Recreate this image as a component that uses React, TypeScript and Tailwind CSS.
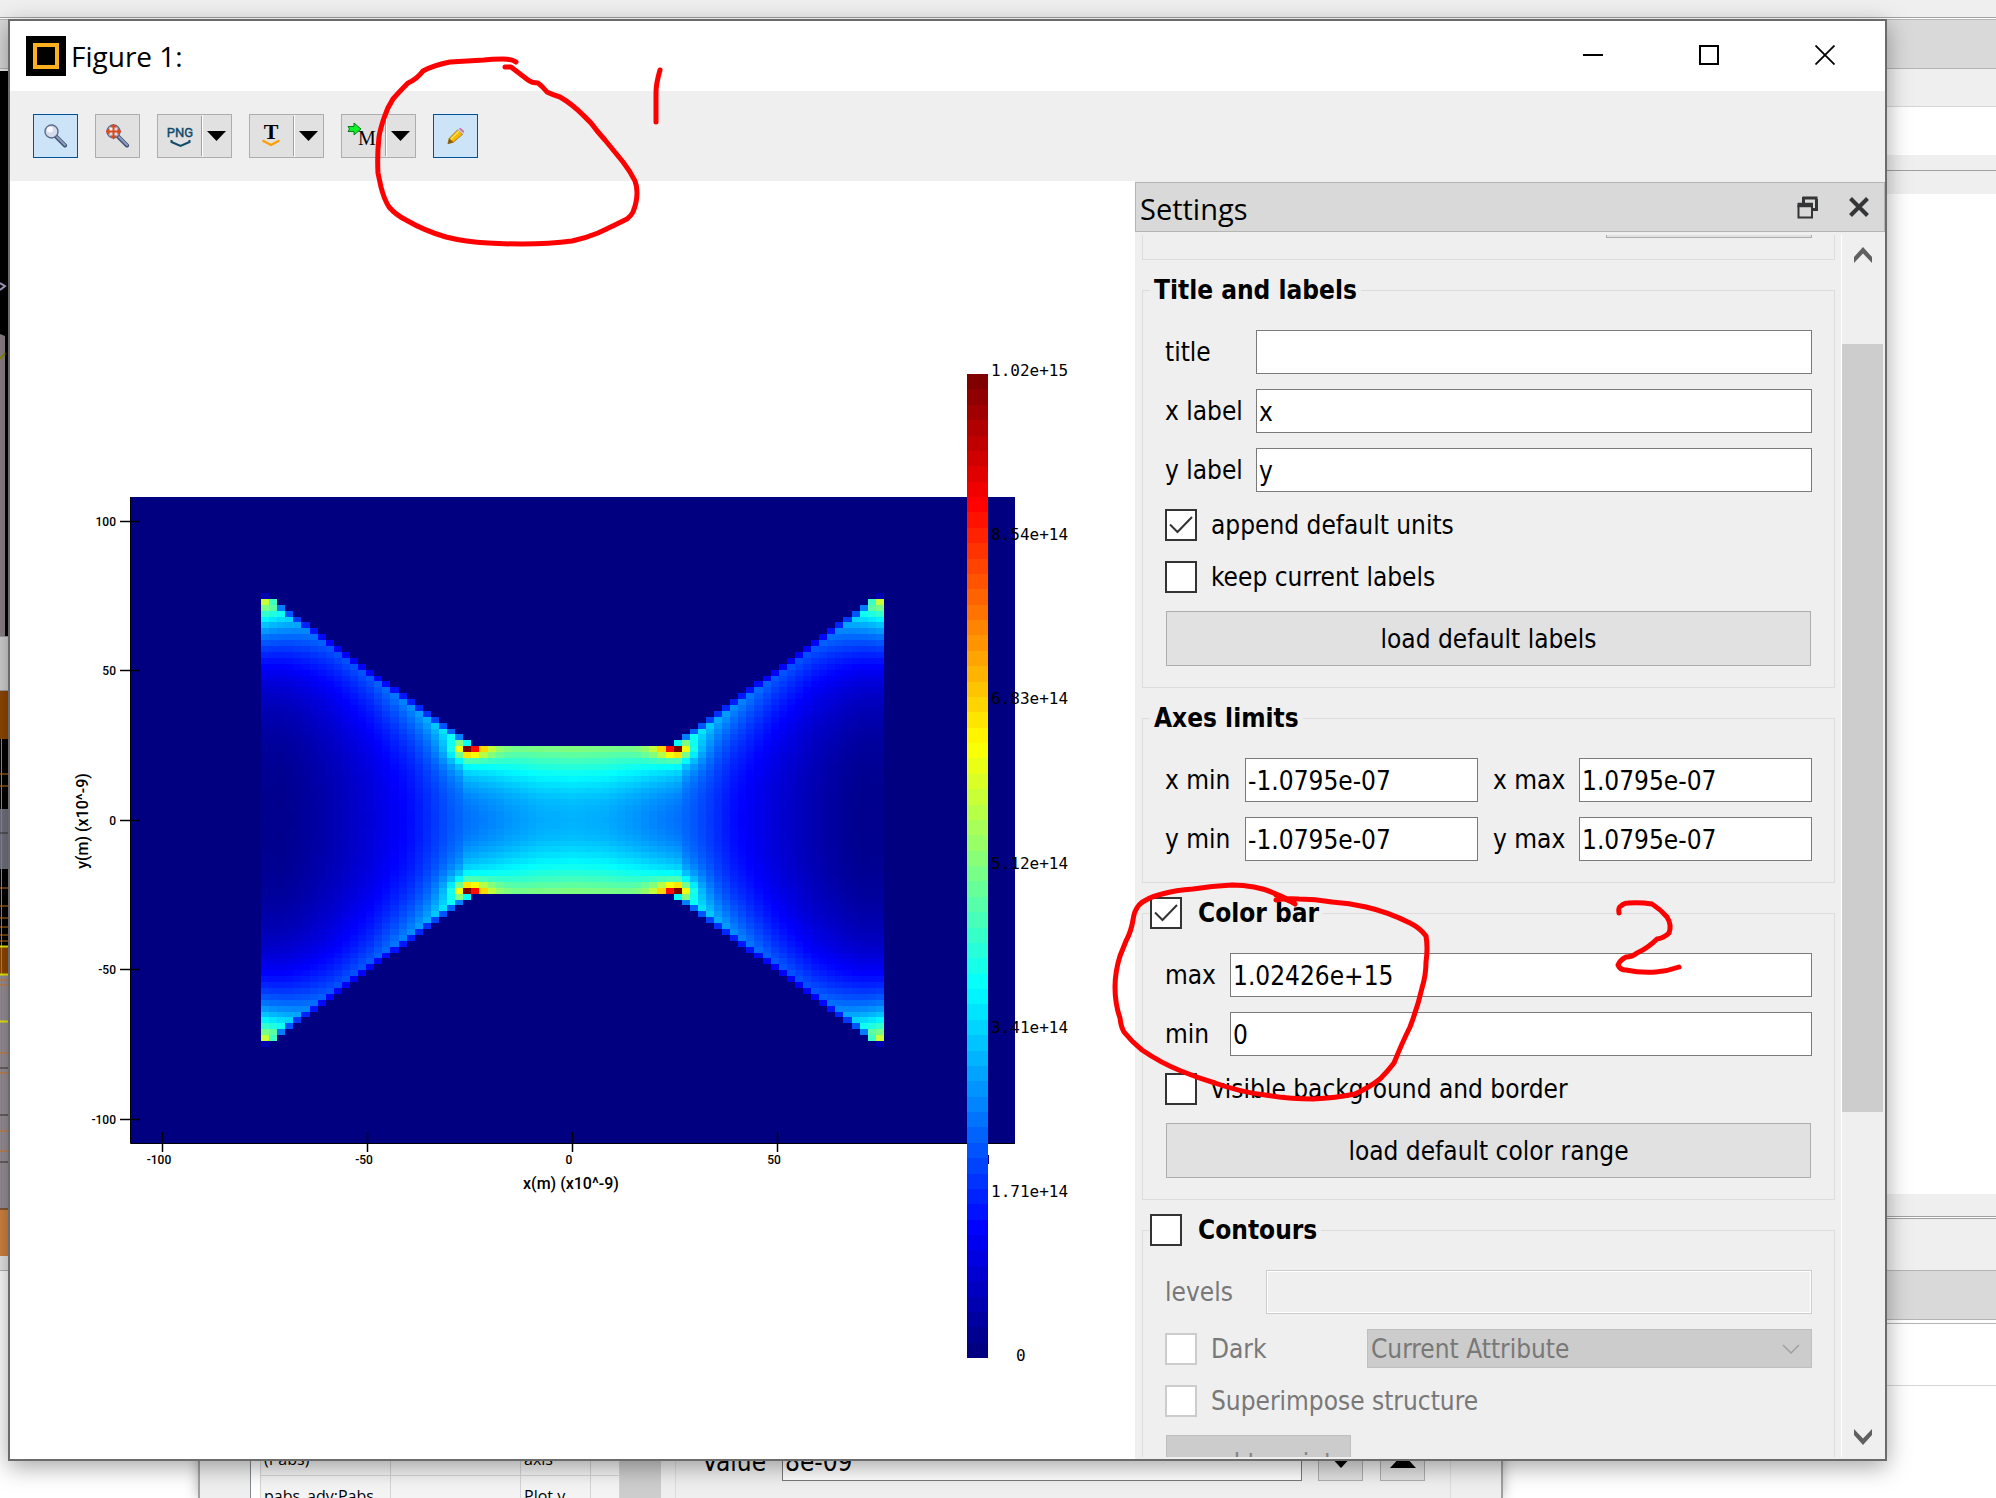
import { useId } from "react";
import type { ReactNode } from "react";

type RGB = [number, number, number];

const CELLS = 77;
const HALF = 38;
const WAIST = 13;

// the usual "jet" map, v in 0..1
function jet(v: number): string {
  const x = Math.min(1, Math.max(0, v));
  const ramp = (c: number) =>
    Math.round(255 * Math.min(1, Math.max(0, 1.5 - Math.abs(4 * x - c))));
  const rgb: RGB = [ramp(3), ramp(2), ramp(1)];
  return `rgb(${rgb.join(",")})`;
}

function lerpTable(table: [number, number][], x: number): number {
  for (let k = 1; k < table.length; k++) {
    const [x1, y1] = table[k];
    const [x0, y0] = table[k - 1];
    if (x <= x1) return y0 + ((y1 - y0) * (x - x0)) / (x1 - x0);
  }
  return table[table.length - 1][1];
}

const AXIS: [number, number][] = [
  [0, 0.3], [4, 0.293], [8, 0.27], [13, 0.235], [15, 0.21], [17, 0.18], [20, 0.135],
  [25, 0.085], [30, 0.045], [34, 0.02], [36, 0.012], [38, 0.014],
];
const EDGE: [number, number][] = [
  [13, 0.44], [14, 0.43], [15, 0.4], [16, 0.37], [18, 0.31], [20, 0.275],
  [25, 0.21], [30, 0.17], [38, 0.14],
];

// field strength in one quadrant, i along x and j along y
function field(i: number, j: number): number | null {
  if (j > (i < WAIST ? 12 : i)) return null;
  if (i === 38 && j === 38) return 0.05;
  if (i === 13 && j === 12) return 1;
  if (i === 13 && j === 13) return 0.38;

  const dx = (i - 13) * (i > 13 ? 1.8 : 1);
  const dy = (j - 12) * (j > 12 ? 2.5 : 1.8);
  const spike = 0.42 * Math.exp(-(Math.hypot(dx, dy) - 1) / 1.5);
  const axis = lerpTable(AXIS, i);
  if (i <= 13) return axis + 0.2 * (j / 12) ** 2 + spike;

  const edge = lerpTable(EDGE, i);
  const tip = 0.44 * Math.exp(-Math.abs(37 - j) / 5.5 - (38 - i) / 10);
  const v = axis + (edge - axis) * (j / i) ** 2.4 + spike + tip;
  return i === j ? v * (i === 37 ? 0.8 : 0.55) : v;
}

type Cell = { x: number; y: number; fill: string };
const cells: Cell[] = [];
for (let row = 0; row < CELLS; row++) {
  for (let col = 0; col < CELLS; col++) {
    const v = field(Math.abs(col - HALF), Math.abs(row - HALF));
    if (v !== null) cells.push({ x: col, y: row, fill: jet(v) });
  }
}

const BANDS = 64;

const barTicks = [
  { label: "1.02e+15", y: 376 },
  { label: "8.54e+14", y: 540 },
  { label: "6.83e+14", y: 704 },
  { label: "5.12e+14", y: 869 },
  { label: "3.41e+14", y: 1033 },
  { label: "1.71e+14", y: 1197 },
];
const yTicks = [
  { label: "100", y: 521 },
  { label: "50", y: 670 },
  { label: "0", y: 820 },
  { label: "-50", y: 969 },
  { label: "-100", y: 1119 },
];
const xTicks = [
  { label: "-100", x: 162 },
  { label: "-50", x: 367 },
  { label: "0", x: 572 },
  { label: "50", x: 777 },
];

function Plot() {
  return (
    <svg
      viewBox="10 181 1125 1278"
      preserveAspectRatio="xMinYMin meet"
      className="h-full w-full font-['Roboto']"
    >
      <rect x="130" y="497" width="885" height="646" fill="#000080" />
      <g
        transform="translate(261 593) scale(8.09 5.895)"
        shapeRendering="crispEdges"
      >
        {cells.map((c) => (
          <rect key={`${c.x}-${c.y}`} x={c.x} y={c.y} width="1" height="1" fill={c.fill} />
        ))}
      </g>
      <path d="M130.5 497V1143.5H1015" fill="none" stroke="#000" />
      {yTicks.map((t) => (
        <g key={t.label}>
          <path d={`M120 ${t.y + 0.5}h20`} stroke="#000" strokeWidth="1.5" />
          <text x="116" y={t.y + 5} textAnchor="end" fontSize="12" fontWeight="500">
            {t.label}
          </text>
        </g>
      ))}
      {xTicks.map((t) => (
        <g key={t.label}>
          <path d={`M${t.x + 0.5} 1132v20`} stroke="#000" strokeWidth="1.5" />
          <text x={t.x - 3} y="1164" textAnchor="middle" fontSize="12" fontWeight="500">
            {t.label}
          </text>
        </g>
      ))}
      <text x="571" y="1189" textAnchor="middle" fontSize="16" fontWeight="500">
        x(m) (x10^-9)
      </text>
      <text
        transform="translate(88 821) rotate(-90)"
        textAnchor="middle"
        fontSize="16"
        fontWeight="500"
      >
        y(m) (x10^-9)
      </text>
      <g transform="translate(967 374)" shapeRendering="crispEdges">
        {Array.from({ length: BANDS }, (_, k) => (
          <rect
            key={k}
            y={k * 15.375}
            width="21"
            height="15.375"
            fill={jet(1 - k / (BANDS - 1))}
          />
        ))}
      </g>
      <path d="M988.5 1155v9" stroke="#000080" />
      <g fontSize="16" className="font-['DejaVu_Sans_Mono']">
        {barTicks.map((t) => (
          <text key={t.label} x="991" y={t.y}>
            {t.label}
          </text>
        ))}
        <text x="1016" y="1361">
          0
        </text>
      </g>
    </svg>
  );
}

/* ---------- toolbar ---------- */

function Magnifier({ children }: { children?: ReactNode }) {
  return (
    <svg viewBox="0 0 24 24" className="h-6 w-6">
      <path d="M12 12.5 21 21.5" stroke="#3f4f73" strokeWidth="4" strokeLinecap="round" />
      <path d="M13 13 21 21" stroke="#8d9dbd" strokeWidth="2" strokeLinecap="round" />
      <circle cx="7.5" cy="7.5" r="6.5" fill="#d5dcec" stroke="#5d6b8c" strokeWidth="1.4" />
      <circle cx="6" cy="5.6" r="3" fill="#f6f8fc" />
      {children}
    </svg>
  );
}

const toolClass =
  "flex h-11 w-[45px] items-center justify-center border border-[#adadad] bg-[#e1e1e1]";
const activeToolClass =
  "flex h-11 w-[45px] items-center justify-center border border-[#005499] bg-[#cce4f7]";

function SplitTool({ label, children }: { label: string; children: ReactNode }) {
  return (
    <div className="flex h-11 w-[75px] border border-[#adadad] bg-[#e1e1e1]">
      <button aria-label={label} className="flex w-[43px] items-center justify-center">
        {children}
      </button>
      <div className="my-px w-px bg-[#a0a0a0]" />
      <button
        aria-label={`${label} options`}
        className="flex flex-1 items-center justify-center border-l border-white pr-0.5"
      >
        <svg viewBox="0 0 19 10" className="h-2.5 w-[19px]">
          <path d="M0 0h19L9.5 10z" />
        </svg>
      </button>
    </div>
  );
}

function Toolbar() {
  return (
    <div className="flex h-[90px] shrink-0 items-center gap-[17px] bg-[#efefef] px-[23px]">
      <button aria-label="Zoom" className={activeToolClass}>
        <Magnifier />
      </button>
      <button aria-label="Fit" className={toolClass}>
        <Magnifier>
          <path d="M7.5 2v11M2 7.5h11" stroke="#d84a1b" strokeWidth="2" />
          <path
            d="M7.5-.5 11 3.500H4zM7.5 15.500l3.500-4H4zM-.5 7.500l4-3.500v7zM15.500 7.500l-4-3.500v7z"
            fill="#d84a1b"
          />
        </Magnifier>
      </button>
      <SplitTool label="Export PNG">
        <svg viewBox="0 0 24 24" className="h-6 w-6 overflow-visible">
          <text
            x="12"
            y="13"
            textAnchor="middle"
            fontSize="13"
            fill="#0d4a6b"
            stroke="#0d4a6b"
            strokeWidth=".4"
            className="font-['Liberation_Sans_Narrow',Roboto,sans-serif]"
          >
            PNG
          </text>
          <path d="M3.500 16v2l9 4 9-4v-2" fill="none" stroke="#0d4a6b" strokeWidth="2" />
        </svg>
      </SplitTool>
      <SplitTool label="Export text">
        <svg viewBox="0 0 24 24" className="h-6 w-6 overflow-visible">
          <text
            x="11"
            y="15"
            textAnchor="middle"
            fontSize="22"
            fontWeight="700"
            className="font-['Liberation_Serif']"
          >
            T
          </text>
          <path d="M2.500 16.500 11 21l8.500-4.500" fill="none" stroke="#ff9c00" strokeWidth="2.200" />
        </svg>
      </SplitTool>
      <SplitTool label="Export to script">
        <svg viewBox="3 0 28 24" className="h-6 w-7 overflow-visible">
          <path
            d="M1 2.500h6V-1l7 6-7 6V7.500H1L2.500 5z"
            fill="#0df22b"
            stroke="#0a7d1c"
            strokeWidth="1"
          />
          <text
            x="20"
            y="21"
            textAnchor="middle"
            fontSize="20"
            className="font-['Liberation_Serif']"
          >
            M
          </text>
        </svg>
      </SplitTool>
      <button aria-label="Edit settings" className={activeToolClass}>
        <svg viewBox="0 0 20 20" className="h-[18px] w-[18px]">
          <path d="M1 18.500 2.500 12.500 12 3l5.500 5L7 17z" fill="#f5b800" stroke="#8a6508" strokeWidth=".8" />
          <path d="M4 14 13.500 4.500" stroke="#ffe05a" strokeWidth="1.500" />
          <path d="M1 18.500 2.500 12.500 7 17z" fill="#8a5a10" />
          <path d="M12 3l1.500-1.500 5.500 5L17.500 8z" fill="#c9cdd6" />
          <path d="M13.300 2 15 .8l4.200 4-1 1.800z" fill="#cf6fa5" />
        </svg>
      </button>
    </div>
  );
}

/* ---------- settings panel ---------- */

const inputClass =
  "h-11 min-w-0 flex-1 border border-[#7a7a7a] bg-white px-0.5 pt-0.5 disabled:border-[#ccc] disabled:bg-[#efefef] disabled:shadow-[inset_0_0_0_1px_white]";
const buttonClass =
  "mx-px mt-[18px] h-[55px] border border-[#adadad] bg-[#e1e1e1] disabled:border-[#bfbfbf] disabled:bg-[#ccc] disabled:text-[#838383]";

function Field({
  label,
  value,
  width,
  disabled,
}: {
  label: string;
  value?: string;
  width: string;
  disabled?: boolean;
}) {
  const id = useId();
  return (
    <div className="flex min-w-0 flex-1 items-center">
      <label htmlFor={id} className={`${width} shrink-0 ${disabled ? "text-[#787878]" : ""}`}>
        {label}
      </label>
      <input id={id} defaultValue={value} disabled={disabled} className={inputClass} />
    </div>
  );
}

function Check({
  label,
  checked,
  disabled,
  bold,
}: {
  label: string;
  checked?: boolean;
  disabled?: boolean;
  bold?: boolean;
}) {
  return (
    <label
      className={`flex h-8 items-center ${bold ? "gap-4" : "gap-3.5"} ${disabled ? "text-[#787878]" : ""}`}
    >
      <span className="grid h-8 w-8 shrink-0">
        <input
          type="checkbox"
          defaultChecked={checked}
          disabled={disabled}
          className="peer col-start-1 row-start-1 h-8 w-8 appearance-none border-2 border-[#333] bg-white disabled:border-[#ccc]"
        />
        <svg
          viewBox="0 0 32 32"
          className="pointer-events-none invisible col-start-1 row-start-1 h-8 w-8 peer-checked:visible"
        >
          <path d="M5 15.500 12.500 23 27 8" fill="none" stroke="#333" strokeWidth="2" />
        </svg>
      </span>
      <span>{label}</span>
    </label>
  );
}

function Group({ title, children }: { title: ReactNode; children: ReactNode }) {
  return (
    <fieldset className="mt-3.5 min-w-0 border border-[#dcdcdc]">
      <legend className="ml-[7px] h-8 pr-1 text-[26px] leading-8 font-bold">{title}</legend>
      <div className="flex flex-col px-[22px] pt-6 pb-[21px]">{children}</div>
    </fieldset>
  );
}

function Settings() {
  return (
    <aside className="flex w-[750px] shrink-0 flex-col bg-[#efefef]">
      <header className="mt-px flex h-[50px] shrink-0 items-center border border-[#b4b4b4] bg-[#d9d9d9] px-1">
        <h2 className="flex-1 pt-1 font-['Open_Sans'] text-[29px]">Settings</h2>
        <button aria-label="Float" className="mr-[30px]">
          <svg viewBox="0 0 22 24" className="h-6 w-[22px]" fill="none" stroke="#333537">
            <path d="M6.500 9V2M5.500 3h15M19.500 4v10.500H15" strokeWidth="3" />
            <path d="M1.500 10v12.500h13.500V10" strokeWidth="2" />
            <path d="M.5 10h15.500" strokeWidth="4.500" />
          </svg>
        </button>
        <button aria-label="Close settings" className="mr-[11px]">
          <svg viewBox="0 0 20 20" className="h-5 w-5" stroke="#333537" strokeWidth="4">
            <path d="M1.500 1.500l17 17M18.500 1.500l-17 17" />
          </svg>
        </button>
      </header>
      <div className="mt-[3px] mb-0.5 flex min-h-0 flex-1 font-['DejaVu_Sans_Condensed'] text-[26px] leading-8">
        <div className="min-w-0 flex-1 overflow-hidden pr-1.5 pl-[7px]">
          <div className="flex h-[25px] items-start justify-end border border-t-0 border-[#dcdcdc] px-[22px]">
            <div className="h-[3px] w-[206px] border border-t-0 border-[#adadad] bg-[#e1e1e1]" />
          </div>

          <Group title={<span className="pl-1">Title and labels</span>}>
            <div className="flex flex-col gap-[15px]">
              <Field label="title" width="w-[91px]" />
              <Field label="x label" value="x" width="w-[91px]" />
              <Field label="y label" value="y" width="w-[91px]" />
            </div>
            <div className="mt-[17px] flex flex-col gap-5">
              <Check label="append default units" checked />
              <Check label="keep current labels" />
            </div>
            <button className={buttonClass}>load default labels</button>
          </Group>

          <Group title={<span className="pl-1">Axes limits</span>}>
            <div className="grid grid-cols-[313fr_319fr] gap-[15px]">
              <Field label="x min" value="-1.0795e-07" width="w-20" />
              <Field label="x max" value="1.0795e-07" width="w-[86px]" />
              <Field label="y min" value="-1.0795e-07" width="w-20" />
              <Field label="y max" value="1.0795e-07" width="w-[86px]" />
            </div>
          </Group>

          <Group title={<Check label="Color bar" checked bold />}>
            <div className="flex flex-col gap-[15px]">
              <Field label="max" value="1.02426e+15" width="w-[65px]" />
              <Field label="min" value="0" width="w-[65px]" />
            </div>
            <div className="mt-[17px]">
              <Check label="visible background and border" />
            </div>
            <button className={buttonClass}>load default color range</button>
          </Group>

          <Group title={<Check label="Contours" bold />}>
            <Field label="levels" width="w-[101px]" disabled />
            <div className="mt-[15px] flex items-center">
              <div className="w-[202px]">
                <Check label="Dark" disabled />
              </div>
              <div className="grid h-[39px] flex-1">
                <select
                  disabled
                  aria-label="Contour colour source"
                  className="col-start-1 row-start-1 appearance-none border border-[#bfbfbf] bg-[#ccc] px-[3px] text-[#787878] opacity-100"
                >
                  <option>Current Attribute</option>
                </select>
                <svg
                  viewBox="0 0 18 10"
                  className="pointer-events-none col-start-1 row-start-1 mr-3 h-2.5 w-[18px] self-center justify-self-end"
                >
                  <path d="M1 1l8 8 8-8" fill="none" stroke="#a0a0a0" strokeWidth="1.500" />
                </svg>
              </div>
            </div>
            <div className="mt-[17px]">
              <Check label="Superimpose structure" disabled />
            </div>
            <button disabled className={`${buttonClass} w-[185px]`}>
              send to print
            </button>
          </Group>
        </div>

        <div className="flex w-11 flex-col border-l border-white pr-0.5">
          <button aria-label="Scroll up" className="flex h-[109px] justify-center pt-3">
            <svg viewBox="0 0 18 16" className="h-4 w-[18px]">
              <path d="M0 10 9 0l9 10v6L9 6.500 0 16z" fill="#606060" />
            </svg>
          </button>
          <div className="flex-[768] bg-[#cdcdcd]" />
          <div className="flex flex-[345] flex-col justify-end">
            <button aria-label="Scroll down" className="flex justify-center pb-3">
              <svg viewBox="0 0 18 16" className="h-4 w-[18px]">
                <path d="M0 6 9 16l9-10V0L9 9.500 0 0z" fill="#606060" />
              </svg>
            </button>
          </div>
        </div>
      </div>
    </aside>
  );
}

/* ---------- windows behind ---------- */

function MainWindow() {
  return (
    <div className="absolute inset-0 flex flex-col">
      <div className="h-[17px] bg-[#efefef]" />
      <div className="h-0.5 border-t border-[#a0a0a0] bg-white" />
      <div className="h-[50px] border-y border-[#b4b4b4] bg-[#d9d9d9]" />
      <div className="flex flex-1 justify-between">
        <div className="flex w-2 flex-col">
          <div className="h-0.5 bg-[#efefef]" />
          <svg viewBox="0 0 8 565" className="h-[565px] w-2 bg-black">
            <path d="M0 212l5 3-5 4" fill="none" stroke="#b5a6cf" strokeWidth="2" />
            <path d="M0 263l5 2v300H0z" fill="#8b838b" />
            <path d="M0 288l5-6" stroke="#8c8a00" strokeWidth="2" />
          </svg>
          <div className="h-[55px] border-y border-[#a0a0a0] bg-[#d4d4d4]" />
          <svg viewBox="0 690 8 565" className="h-[565px] w-2">
            <path fill="#8f4800" d="M0 690h8v48H0z" />
            <path fill="#000" d="M0 738h8v208H0z" />
            <path fill="#717480" d="M0 808h8v60H0z" />
            <path fill="#8f4800" d="M0 946h8v28H0z" />
            <path fill="#9a929a" d="M0 974h8v233H0z" />
            <path fill="#d28540" d="M0 1207h8v48H0z" />
            <path
              d="M0 773h8M0 785h8M0 887h8M0 905h8M0 917h8M0 926h8M0 934h8M0 940h8M0 979h8M0 984h8M0 1052h8M0 1072h8M0 1130h8M0 1150h8M1.500 738v469"
              stroke="#e07a18"
            />
            <path d="M0 945.500h8M0 973.500h8M0 1020.500h8" stroke="#eef000" strokeWidth="2" />
            <path d="M0 832h8M0 1067h8M0 1114h8M0 1161h8M0 1208h8" stroke="#333" />
          </svg>
          <div className="h-[15px] border-b border-[#b4b4b4] bg-[#e8e8e8]" />
          <div className="flex-1 bg-white" />
        </div>
        <div className="flex w-[120px] flex-col bg-white">
          <div className="h-[38px] border-b border-[#d6d6d6] bg-[#efefef]" />
          <div className="h-12" />
          <div className="h-[15px] bg-[#efefef]" />
          <div className="h-6 border-t border-[#a0a0a0] bg-[#efefef]" />
          <div className="h-[1000px]" />
          <div className="h-[22px] bg-[#efefef]" />
          <div className="h-[3px] border-y border-[#a0a0a0] bg-white" />
          <div className="h-[51px] bg-[#efefef]" />
          <div className="h-[50px] border-y border-[#b4b4b4] bg-[#d9d9d9]" />
          <div className="h-[66px] border-b border-[#d6d6d6] pt-[3px]">
            <div className="h-full border-t border-[#b4b4b4]" />
          </div>
        </div>
      </div>
    </div>
  );
}

function ParameterWindow() {
  return (
    <div className="absolute right-[493px] bottom-0 left-[198px] flex h-20 items-stretch border-x-2 border-[#a0a0a0] bg-[#efefef] shadow-[0_0_12px_rgba(0,0,0,0.3)]">
      <div className="ml-[50px] flex border-l border-[#828790] bg-white pl-[9px]">
        <table className="w-[360px] table-fixed border-collapse bg-[#f4f4f4] font-['Open_Sans'] text-[16px] leading-5">
          <tbody>
            <tr className="h-[57px] align-bottom">
              <td className="w-[130px] border border-[#d4d4d4] px-[3px] pb-1.5">(Pabs)</td>
              <td className="w-[130px] border border-[#d4d4d4]" />
              <td className="w-[70px] border border-[#d4d4d4] px-[3px] pb-1.5">axis</td>
              <td className="border border-[#d4d4d4]" />
            </tr>
            <tr className="h-[50px] align-top">
              <td className="border border-[#d4d4d4] px-[3px] pt-2.5">pabs_adv:Pabs</td>
              <td className="border border-[#d4d4d4]" />
              <td className="border border-[#d4d4d4] px-[3px] pt-2.5">Plot y</td>
              <td className="border border-[#d4d4d4]" />
            </tr>
          </tbody>
        </table>
        <div className="w-[41px] bg-[#cdcdcd]" />
      </div>
      <div className="mr-[50px] ml-3.5 flex flex-1 items-start border-x border-[#dcdcdc] pt-[19px] pl-[26px] font-['DejaVu_Sans_Condensed'] text-[26px]">
        <label htmlFor="value" className="w-20 pt-0.5 leading-[46px]">
          Value
        </label>
        <input
          id="value"
          defaultValue="8e-09"
          className="h-11 min-w-0 flex-1 border border-[#7a7a7a] bg-white px-0.5 pt-1.5"
        />
        <button aria-label="Move down" className="ml-4 flex h-11 w-[45px] items-center justify-center border border-[#adadad] bg-[#e1e1e1] pt-1">
          <svg viewBox="0 0 26 14" className="h-3.5 w-[26px]">
            <path d="M0 0h26L13 14z" />
          </svg>
        </button>
        <button aria-label="Move up" className="mr-[25px] ml-[17px] flex h-11 w-[45px] items-center justify-center border border-[#adadad] bg-[#e1e1e1] pt-1">
          <svg viewBox="0 0 26 14" className="h-3.5 w-[26px]">
            <path d="M0 14h26L13 0z" />
          </svg>
        </button>
      </div>
    </div>
  );
}

/* ---------- figure window ---------- */

const captionClass = "flex w-[116px] items-center justify-center pb-0.5";

function TitleBar() {
  return (
    <div className="flex h-[70px] shrink-0 bg-white pr-0.5">
      <div className="flex flex-1 items-center gap-[5px] pl-4 font-['Open_Sans'] text-[28px]">
        <svg viewBox="0 0 40 40" className="h-10 w-10">
          <path d="M0 0h40v40H0z" />
          <path d="M9 9h22v22H9z" fill="none" stroke="#ffb01e" strokeWidth="4" />
        </svg>
        <h1>Figure 1:</h1>
      </div>
      <button aria-label="Minimize" className={captionClass}>
        <svg viewBox="0 0 20 20" className="h-5 w-5">
          <path d="M0 9h20v2H0z" />
        </svg>
      </button>
      <button aria-label="Maximize" className={captionClass}>
        <svg viewBox="0 0 20 20" className="h-5 w-5">
          <path d="M1 1h18v18H1z" fill="none" stroke="#000" strokeWidth="2" />
        </svg>
      </button>
      <button aria-label="Close" className={captionClass}>
        <svg viewBox="0 0 20 20" className="h-5 w-5">
          <path d="M.5.5l19 19M19.500.5l-19 19" stroke="#000" strokeWidth="1.800" />
        </svg>
      </button>
    </div>
  );
}

function Annotations() {
  return (
    <svg
      viewBox="0 0 1996 1498"
      preserveAspectRatio="xMinYMin meet"
      className="pointer-events-none absolute inset-0 h-full w-full"
      fill="none"
      stroke="#f00"
      strokeWidth="5"
      strokeLinecap="round"
      strokeLinejoin="round"
    >
      <path d="M516 62Q512 59 503 59Q492 59 484 60L450 62Q434 65 423 71Q417 79 408 83Q399 92 393 99Q387 108 384 118Q380 130 379 137Q377 155 378 173L381 187Q384 199 389 207Q396 215 406 220Q425 231 446 237Q466 242 488 243Q504 244 522 244Q550 244 572 241Q586 238 598 233Q613 226 627 219Q631 216 633 212Q637 202 637 193Q637 186 635 181Q630 171 623 162L605 140L598 132Q591 122 583 115Q572 104 560 97Q553 95 547 92Q542 86 538 83Q532 83 528 80L511 67L505 67" />
      <path d="M660 70Q656 84 656 92L656 122" />
      <path d="M1295 904Q1285 897 1276 894Q1265 889 1254 887Q1243 885 1232 885Q1212 886 1193 889Q1176 890 1162 894Q1146 898 1139 905Q1134 911 1133 920Q1131 932 1126 941L1120 956Q1115 972 1115 987Q1115 1004 1120 1018Q1121 1027 1124 1032Q1132 1042 1142 1050Q1161 1063 1181 1071Q1198 1078 1215 1083Q1240 1092 1265 1095Q1290 1099 1313 1099Q1336 1098 1355 1094Q1370 1087 1380 1079Q1388 1071 1394 1063Q1402 1043 1410 1027Q1418 1006 1422 988Q1426 975 1426 962Q1428 948 1426 936Q1420 928 1410 923Q1388 912 1366 907Q1349 903 1332 902Q1315 899 1299 899Q1286 898 1276 900" />
      <path d="M1276 895L1294 903" />
      <path d="M1619 913Q1618 907 1621 906Q1624 903 1628 903Q1640 902 1652 904Q1660 909 1667 917Q1672 925 1669 933Q1664 938 1657 939Q1648 948 1637 953Q1632 957 1626 957Q1620 960 1618 965Q1620 970 1626 970Q1640 973 1656 972Q1668 971 1679 967" />
    </svg>
  );
}

export default function App() {
  return (
    <div className="relative h-screen overflow-hidden bg-white text-black">
      <MainWindow />
      <ParameterWindow />
      <main className="absolute top-[19px] right-[109px] bottom-[37px] left-2 flex flex-col border-2 border-[#6b6b6b] bg-white shadow-[0_6px_22px_rgba(0,0,0,0.35)]">
        <TitleBar />
        <Toolbar />
        <div className="flex min-h-0 flex-1">
          <div className="min-w-0 flex-1">
            <Plot />
          </div>
          <Settings />
        </div>
      </main>
      <Annotations />
    </div>
  );
}
